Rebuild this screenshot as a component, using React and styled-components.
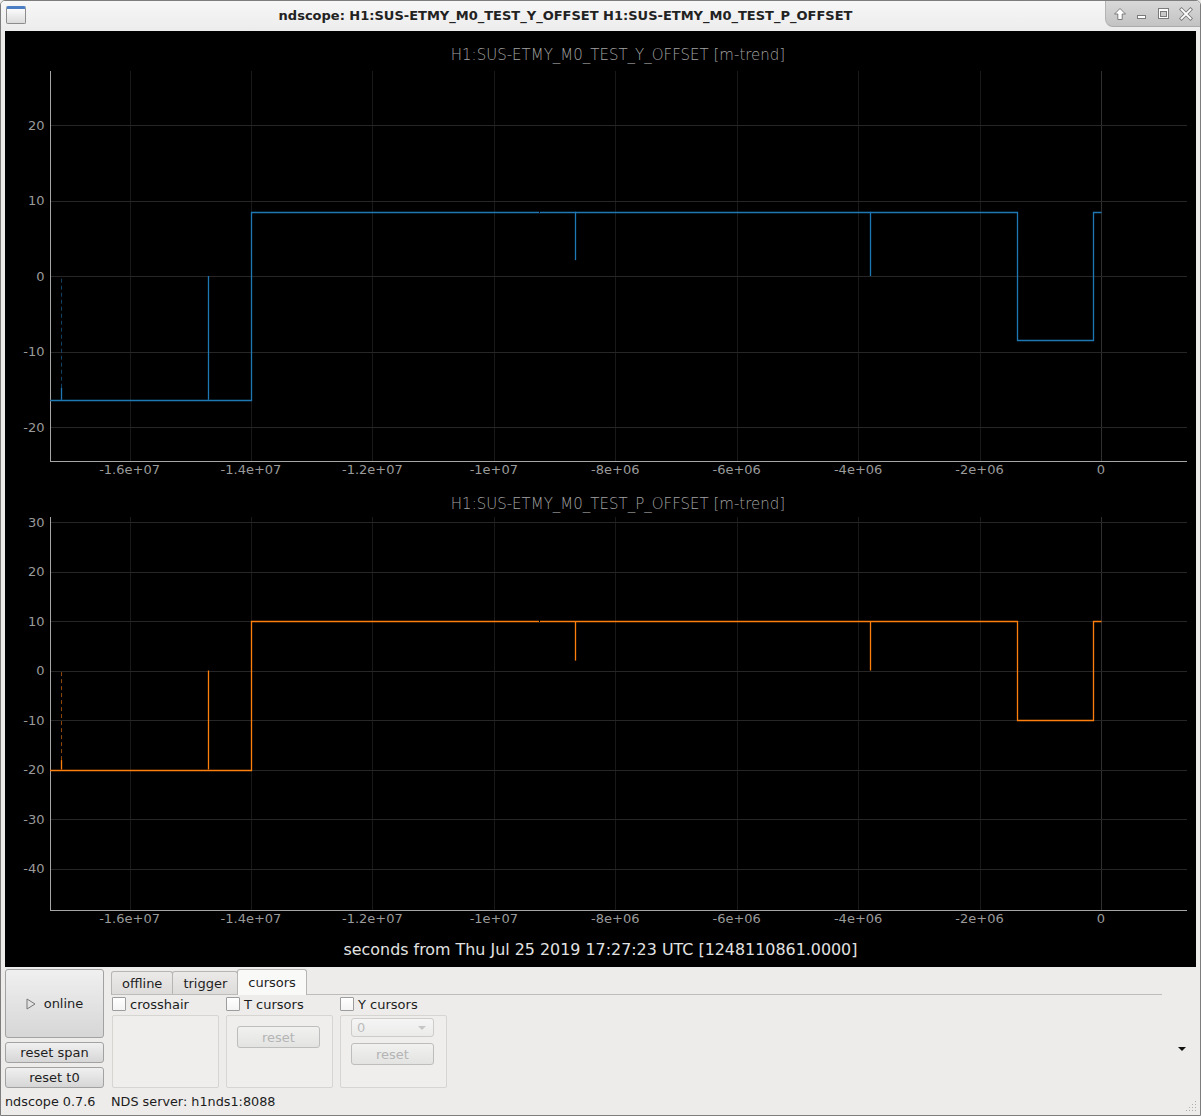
import React from "react";
import styled, { createGlobalStyle } from "styled-components";

const GlobalStyle = createGlobalStyle`
  html, body { margin: 0; padding: 0; }
  body {
    background: #edeceb;
    font-family: "DejaVu Sans", "Liberation Sans", sans-serif;
    font-size: 13px;
    color: #1c1c1c;
  }
  *, *::before, *::after { box-sizing: border-box; }
`;

// page-x of t = 0 and pixels per second on the time axis
const T0_X = 1101;
const X_PER_SEC = 121.43 / 2e6;
const tx = (t) => T0_X + t * X_PER_SEC;
const X_LEFT = 50;
const X_RIGHT = 1187;
const snap = (v) => Math.round(v) + 0.5;

const X_TICKS = [
  [-16e6, "-1.6e+07"],
  [-14e6, "-1.4e+07"],
  [-12e6, "-1.2e+07"],
  [-10e6, "-1e+07"],
  [-8e6, "-8e+06"],
  [-6e6, "-6e+06"],
  [-4e6, "-4e+06"],
  [-2e6, "-2e+06"],
  [0, "0"],
];

const PLOTS = [
  {
    channel: "H1:SUS-ETMY_M0_TEST_Y_OFFSET",
    color: "#1f77b4",
    top: 31,
    height: 454,
    titleY: 55,
    axisTop: 71,
    axisBottom: 461,
    tickLabelY: 469,
    zeroY: 276,
    pxPerUnit: 7.55,
    yTicks: [20, 10, 0, -10, -20],
    high: 8.5,
    low: -16.4,
    dip: -8.5,
    firstSpike: -14.8,
    midSpike: 2.1,
  },
  {
    channel: "H1:SUS-ETMY_M0_TEST_P_OFFSET",
    color: "#ff7f0e",
    top: 485,
    height: 445,
    titleY: 504,
    axisTop: 517,
    axisBottom: 910,
    tickLabelY: 918,
    zeroY: 670.5,
    pxPerUnit: 4.95,
    yTicks: [30, 20, 10, 0, -10, -20, -30, -40],
    high: 10,
    low: -20,
    dip: -10,
    firstSpike: -18.1,
    midSpike: 2,
  },
];

/* ---------- window chrome ---------- */

const Window = styled.div`
  width: 1201px;
  height: 1116px;
  border: 1px solid #7d7d7d;
  border-radius: 5px 5px 0 0;
  background: #edeceb;
  display: flex;
  flex-direction: column;
  overflow: hidden;
  position: relative;
`;

const TitleBar = styled.div`
  height: 30px;
  flex: none;
  display: flex;
  background: linear-gradient(#f7f7f7, #ececec);
`;

const AppIcon = styled.div`
  width: 20px;
  height: 18px;
  margin: 5px 0 0 5px;
  border: 1px solid #8c8c8c;
  border-top: 3px solid #4b7fc4;
  border-radius: 2px;
  background: linear-gradient(#fbfbfb, #dcdcdc);
`;

const WindowTitle = styled.div`
  flex: 1;
  text-align: center;
  line-height: 30px;
  font-weight: bold;
  font-size: 13px;
  color: #222;
  white-space: nowrap;
`;

const WinButtons = styled.div`
  width: 95px;
  height: 26px;
  display: flex;
  align-items: center;
  gap: 8px;
  padding-left: 7px;
  background: linear-gradient(#d8d8d8, #c3c3c3);
  border-left: 1px solid #b3b3b3;
  border-bottom: 1px solid #ababab;
  border-bottom-left-radius: 8px;
  border-top-right-radius: 4px;
`;

const WinIcon = ({ kind }) => (
  <svg width="14" height="14" viewBox="0 0 14 14">
    {kind === "up" && (
      <path d="M7 1.5 L12.5 7 H9.2 V12.5 H4.8 V7 H1.5 Z" fill="#fff" stroke="#7a7a7a" strokeWidth="1" />
    )}
    {kind === "min" && <rect x="2.5" y="8.5" width="8" height="3" fill="#fff" stroke="#7a7a7a" />}
    {kind === "max" && (
      <>
        <rect x="1.5" y="1.5" width="10" height="10" fill="#fff" stroke="#7a7a7a" />
        <rect x="3.5" y="4.5" width="6" height="5" fill="#c9c9c9" stroke="#7a7a7a" />
      </>
    )}
    {kind === "close" && (
      <>
        <path d="M2.5 2.5 L11.5 11.5 M11.5 2.5 L2.5 11.5" stroke="#7a7a7a" strokeWidth="3.6" strokeLinecap="square" />
        <path d="M2.5 2.5 L11.5 11.5 M11.5 2.5 L2.5 11.5" stroke="#fff" strokeWidth="1.8" strokeLinecap="square" />
      </>
    )}
  </svg>
);

const Body = styled.div`
  flex: 1;
  display: flex;
  flex-direction: column;
  padding: 0 4px;
`;

/* ---------- plots ---------- */

const Canvas = styled.div`
  height: 936px;
  flex: none;
  background: #000;
  display: flex;
  flex-direction: column;
`;

const PlotSvg = styled.svg`
  display: block;
  flex: none;
  font-family: "DejaVu Sans", sans-serif;
`;

const AxisCaption = styled.div`
  flex: 1;
  display: flex;
  align-items: center;
  justify-content: center;
  color: #e2e2e2;
  font-size: 15.9px;
  padding-top: 1px;
`;

function Plot({ cfg }) {
  const ty = (v) => cfg.zeroY - v * cfg.pxPerUnit;
  const c = cfg.color;
  const step =
    `M${X_LEFT} ${snap(ty(cfg.low))} H${snap(tx(-14e6))} V${snap(ty(cfg.high))} ` +
    `H${snap(tx(-1.383e6))} V${snap(ty(cfg.dip))} H${snap(tx(-0.132e6))} V${snap(ty(cfg.high))} H${snap(tx(0))}`;
  const spikes = [
    [-14.71e6, cfg.low, 0],
    [-8.663e6, cfg.high, cfg.midSpike],
    [-3.805e6, cfg.high, 0],
  ];
  const firstX = snap(tx(-17.13e6));
  const gapX = snap(tx(-9.256e6));

  return (
    <PlotSvg width={1191} height={cfg.height} viewBox={`5 ${cfg.top} 1191 ${cfg.height}`}>
      <text x={618} y={cfg.titleY} fontSize="15" fontWeight="200" fill="#a2a2a2" textAnchor="middle" dominantBaseline="central">
        {cfg.channel} [m-trend]
      </text>

      {X_TICKS.map(([t]) => (
        <line key={t} x1={snap(tx(t))} x2={snap(tx(t))} y1={cfg.axisTop} y2={cfg.axisBottom} stroke={t === 0 ? "#303030" : "#191919"} />
      ))}
      {cfg.yTicks.map((v) => (
        <line key={v} x1={X_LEFT} x2={X_RIGHT} y1={snap(ty(v))} y2={snap(ty(v))} stroke="#262626" />
      ))}

      <line x1={X_LEFT + 0.5} x2={X_LEFT + 0.5} y1={cfg.axisTop} y2={cfg.axisBottom + 1} stroke="#a6a6a6" />
      <line x1={X_LEFT} x2={X_RIGHT} y1={cfg.axisBottom + 0.5} y2={cfg.axisBottom + 0.5} stroke="#a6a6a6" />

      {cfg.yTicks.map((v) => (
        <text key={v} x={44.5} y={ty(v)} fontSize="13" fill="#9a9a9a" textAnchor="end" dominantBaseline="central">
          {v}
        </text>
      ))}
      {X_TICKS.map(([t, label]) => (
        <text key={t} x={tx(t)} y={cfg.tickLabelY} fontSize="13" fill="#9a9a9a" textAnchor="middle" dominantBaseline="central">
          {label}
        </text>
      ))}

      <path d={step} fill="none" stroke={c} strokeWidth="1.3" />
      {spikes.map(([t, a, b]) => (
        <line key={t} x1={snap(tx(t))} x2={snap(tx(t))} y1={ty(a)} y2={ty(b)} stroke={c} strokeWidth="1.3" />
      ))}
      <line x1={firstX} x2={firstX} y1={ty(cfg.low)} y2={ty(cfg.firstSpike)} stroke={c} strokeWidth="1.3" />
      <line x1={firstX} x2={firstX} y1={ty(cfg.firstSpike)} y2={ty(0)} stroke={c} strokeOpacity="0.55" strokeDasharray="4 3" />
      <line x1={gapX} x2={gapX} y1={ty(cfg.high) - 1.5} y2={ty(cfg.high) + 1} stroke="#000" />
    </PlotSvg>
  );
}

/* ---------- control panel ---------- */

const Panel = styled.div`
  flex: 1;
  display: flex;
  flex-direction: column;
`;

const PanelRow = styled.div`
  display: flex;
  padding-top: 2px;
`;

const LeftColumn = styled.div`
  width: 99px;
  display: flex;
  flex-direction: column;
  gap: 4px;
`;

const Button = styled.button`
  height: ${(p) => (p.$tall ? 69 : 21)}px;
  width: ${(p) => (p.$w ? `${p.$w}px` : "auto")};
  padding: 0;
  font: 13px "DejaVu Sans", sans-serif;
  color: ${(p) => (p.disabled ? "#b4b4b4" : "#1e1e1e")};
  border: 1px solid ${(p) => (p.disabled ? "#bdbdbd" : "#a2a2a2")};
  border-radius: 3px;
  background: ${(p) =>
    p.disabled ? "linear-gradient(#f1f1f0, #e3e3e2)" : "linear-gradient(#f0f0f0, #d6d6d6)"};
  display: flex;
  align-items: center;
  justify-content: center;
  gap: 8px;
`;

const PlayGlyph = () => (
  <svg width="10" height="12" viewBox="0 0 10 12">
    <path d="M1 1 L9 6 L1 11 Z" fill="none" stroke="#777" strokeWidth="1" />
  </svg>
);

const TabArea = styled.div`
  width: 1051px;
  margin-left: 7px;
  display: flex;
  flex-direction: column;
`;

const TabBar = styled.div`
  height: 26px;
  display: flex;
  align-items: flex-end;
  border-bottom: 1px solid #bdbcba;
`;

const Tab = styled.div`
  height: ${(p) => (p.$active ? 26 : 23)}px;
  margin-bottom: ${(p) => (p.$active ? -1 : 0)}px;
  margin-left: ${(p) => (p.$first ? 0 : -1)}px;
  padding: 0 10px;
  display: flex;
  align-items: center;
  border: 1px solid #b6b5b3;
  border-bottom: none;
  border-radius: 3px 3px 0 0;
  background: ${(p) => (p.$active ? "#f9f9f8" : "linear-gradient(#ebeae9, #dddcda)")};
  color: #1e1e1e;
`;

const TabContent = styled.div`
  display: flex;
  gap: 7px;
  padding: 2px 0 0 1px;
`;

const CursorColumn = styled.div`
  width: 107px;
  display: flex;
  flex-direction: column;
  gap: 4px;
`;

const CheckRow = styled.label`
  height: 14px;
  display: flex;
  align-items: center;
  gap: 4px;
`;

const CheckBox = styled.span`
  width: 14px;
  height: 14px;
  border: 1px solid #9d9d9d;
  border-radius: 1px;
  background: linear-gradient(#fff, #f4f4f4);
`;

const GroupBox = styled.div`
  height: 73px;
  border: 1px solid #d7d5d2;
  border-radius: 2px;
  background: #efeeec;
  display: flex;
  flex-direction: column;
  align-items: flex-start;
  gap: 6px;
  padding: ${(p) => p.$pad};
`;

const Combo = styled.div`
  width: 83px;
  height: 19px;
  border: 1px solid #cdcccb;
  border-radius: 3px;
  background: linear-gradient(#f5f5f5, #ebebea);
  color: #bdbdbd;
  display: flex;
  align-items: center;
  justify-content: space-between;
  padding: 0 7px 0 5px;
`;

const ComboArrow = styled.span`
  width: 0;
  height: 0;
  border-left: 4px solid transparent;
  border-right: 4px solid transparent;
  border-top: 4px solid #c6c6c6;
`;

const ArrowColumn = styled.div`
  width: 34px;
  padding: 78px 0 0 16px;
`;

const DownArrow = styled.div`
  width: 0;
  height: 0;
  border-left: 4px solid transparent;
  border-right: 4px solid transparent;
  border-top: 4px solid #111;
`;

const StatusBar = styled.div`
  height: 27px;
  display: flex;
  align-items: center;
  font-size: 12.8px;
`;

const StatusItem = styled.span`
  width: ${(p) => (p.$w ? `${p.$w}px` : "auto")};
`;

const SizeGrip = styled.svg`
  position: absolute;
  right: 3px;
  bottom: 3px;
`;

export default function App() {
  return (
    <>
      <GlobalStyle />
      <Window>
        <TitleBar>
          <AppIcon />
          <WindowTitle>ndscope: H1:SUS-ETMY_M0_TEST_Y_OFFSET H1:SUS-ETMY_M0_TEST_P_OFFSET</WindowTitle>
          <WinButtons>
            <WinIcon kind="up" />
            <WinIcon kind="min" />
            <WinIcon kind="max" />
            <WinIcon kind="close" />
          </WinButtons>
        </TitleBar>
        <Body>
          <Canvas>
            {PLOTS.map((p) => (
              <Plot key={p.channel} cfg={p} />
            ))}
            <AxisCaption>seconds from Thu Jul 25 2019 17:27:23 UTC [1248110861.0000]</AxisCaption>
          </Canvas>
          <Panel>
            <PanelRow>
              <LeftColumn>
                <Button $tall>
                  <PlayGlyph />
                  online
                </Button>
                <Button>reset span</Button>
                <Button>reset t0</Button>
              </LeftColumn>
              <TabArea>
                <TabBar>
                  <Tab $first>offline</Tab>
                  <Tab>trigger</Tab>
                  <Tab $active>cursors</Tab>
                </TabBar>
                <TabContent>
                  <CursorColumn>
                    <CheckRow>
                      <CheckBox />
                      crosshair
                    </CheckRow>
                    <GroupBox />
                  </CursorColumn>
                  <CursorColumn>
                    <CheckRow>
                      <CheckBox />
                      T cursors
                    </CheckRow>
                    <GroupBox $pad="10px 0 0 10px">
                      <Button disabled $w={83} style={{ height: 22 }}>
                        reset
                      </Button>
                    </GroupBox>
                  </CursorColumn>
                  <CursorColumn>
                    <CheckRow>
                      <CheckBox />
                      Y cursors
                    </CheckRow>
                    <GroupBox $pad="2px 0 0 10px">
                      <Combo>
                        0
                        <ComboArrow />
                      </Combo>
                      <Button disabled $w={83} style={{ height: 22 }}>
                        reset
                      </Button>
                    </GroupBox>
                  </CursorColumn>
                </TabContent>
              </TabArea>
              <ArrowColumn>
                <DownArrow />
              </ArrowColumn>
            </PanelRow>
            <StatusBar>
              <StatusItem $w={106}>ndscope 0.7.6</StatusItem>
              <StatusItem>NDS server: h1nds1:8088</StatusItem>
            </StatusBar>
          </Panel>
        </Body>
        <SizeGrip width="11" height="11" viewBox="0 0 11 11">
          {[[9, 1], [9, 4], [6, 4], [9, 7], [6, 7], [3, 7], [9, 10], [6, 10], [3, 10], [0, 10]].map(([x, y]) => (
            <rect key={`${x}-${y}`} x={x} y={y - 1} width="1" height="1" fill="#b0aeab" />
          ))}
        </SizeGrip>
      </Window>
    </>
  );
}
